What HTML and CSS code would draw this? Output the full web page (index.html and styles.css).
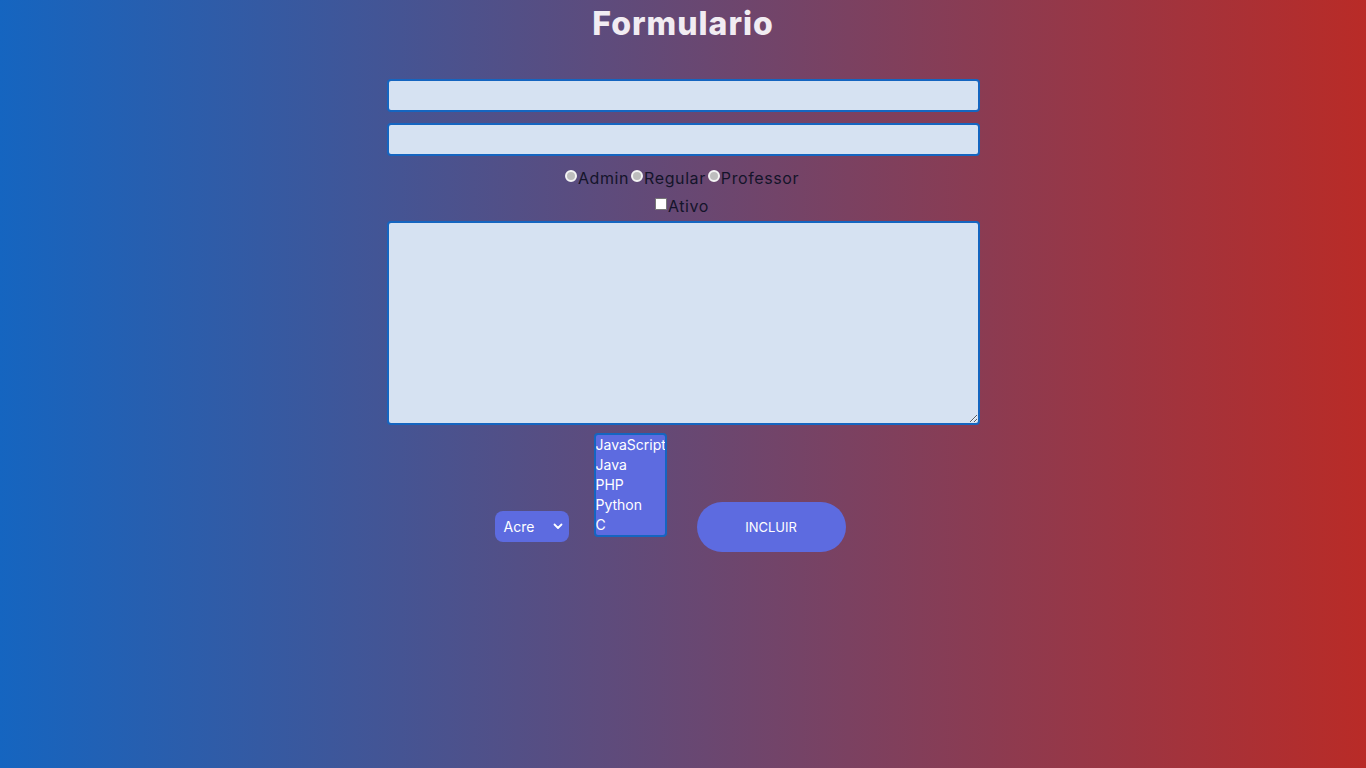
FILE: index.html
```html
<!DOCTYPE html>
<html lang="pt">
<head>
<meta charset="utf-8">
<title>Formulario</title>
<link rel="stylesheet" href="styles.css">
</head>
<body>
<h1 class="title">Formulario</h1>
<form class="form">
  <input class="field" type="text">
  <input class="field" type="text">
  <div class="radios">
    <label class="opt"><input class="radio" type="radio" name="tipo">Admin</label>
    <label class="opt"><input class="radio" type="radio" name="tipo">Regular</label>
    <label class="opt"><input class="radio" type="radio" name="tipo">Professor</label>
  </div>
  <div class="checkrow">
    <label class="opt"><input class="check" type="checkbox">Ativo</label>
  </div>
  <textarea class="area"></textarea>
  <div class="actions">
    <div class="select">Acre
      <svg class="chev" width="10" height="7" viewBox="0 0 10 7"><path d="M1.5 1.5 L5 5 L8.5 1.5" fill="none" stroke="#fff" stroke-width="1.8" stroke-linecap="round" stroke-linejoin="round"/></svg>
    </div>
    <div class="listbox">
      <div class="item">JavaScript</div>
      <div class="item">Java</div>
      <div class="item">PHP</div>
      <div class="item">Python</div>
      <div class="item">C</div>
    </div>
    <button class="btn" type="button">INCLUIR</button>
  </div>
</form>
</body>
</html>
```
FILE: styles.css
```css
* { box-sizing: border-box; }
html, body { height: 100%; }
body {
  margin: 0;
  background: linear-gradient(to right, #1565c0, #b92b27);
  font-family: "Inter", "Open Sans", sans-serif;
  color: #111;
}
.title {
  margin: 0;
  padding-top: 2px;
  text-align: center;
  font-size: 32px;
  line-height: 44px;
  font-weight: 800;
  color: #f1ecf2;
  letter-spacing: 1px;
}
.form {
  width: 593px;
  margin: 33px auto 0;
  display: flex;
  flex-direction: column;
  align-items: stretch;
}
.field {
  height: 33px;
  margin-bottom: 11px;
  background: #d6e2f2;
  border: 2px solid #1565c0;
  border-radius: 4px;
  outline: none;
}
.radios, .checkrow {
  display: flex;
  justify-content: center;
  font-size: 16px;
  line-height: 24px;
  color: #14142a;
  letter-spacing: 0.6px;
}
.radios { margin-top: -1px; }
.checkrow { margin-top: 4px; }
.opt { display: flex; align-items: center; margin-right: 2px; }
.radio {
  appearance: none;
  width: 12px;
  height: 12px;
  margin: 0 1px 4px 0;
  border-radius: 50%;
  background: #bdbdbd;
  border: 2px solid #f4f4f4;
}
.check {
  appearance: none;
  width: 12px;
  height: 12px;
  margin: 0 1px 4px 0;
  background: #fff;
  border: 1px solid #777;
  border-radius: 1px;
}
.area {
  height: 204px;
  margin-top: 3px;
  background: #d6e2f2;
  border: 2px solid #1565c0;
  border-radius: 4px;
  resize: vertical;
  outline: none;
}
.actions {
  display: flex;
  align-items: flex-start;
  margin-top: 8px;
  padding-left: 108px;
}
.select {
  width: 74px;
  height: 31px;
  margin-top: 78px;
  border-radius: 8px;
  background: #5d6be0;
  color: #fff;
  font-size: 14px;
  display: flex;
  align-items: center;
  justify-content: space-between;
  padding: 0 6px 0 9px;
}
.listbox {
  width: 73px;
  height: 104px;
  margin-left: 25px;
  background: #5d6be0;
  border: 2px solid #1565c0;
  border-radius: 4px;
  color: #fff;
  font-size: 14px;
  line-height: 20px;
  overflow: hidden;
}
.item { white-space: nowrap; }
.btn {
  width: 149px;
  height: 50px;
  margin-top: 69px;
  margin-left: 30px;
  background: #5d6be0;
  border: none;
  border-radius: 25px;
  color: #fff;
  font-family: inherit;
  font-size: 13px;
}
```
